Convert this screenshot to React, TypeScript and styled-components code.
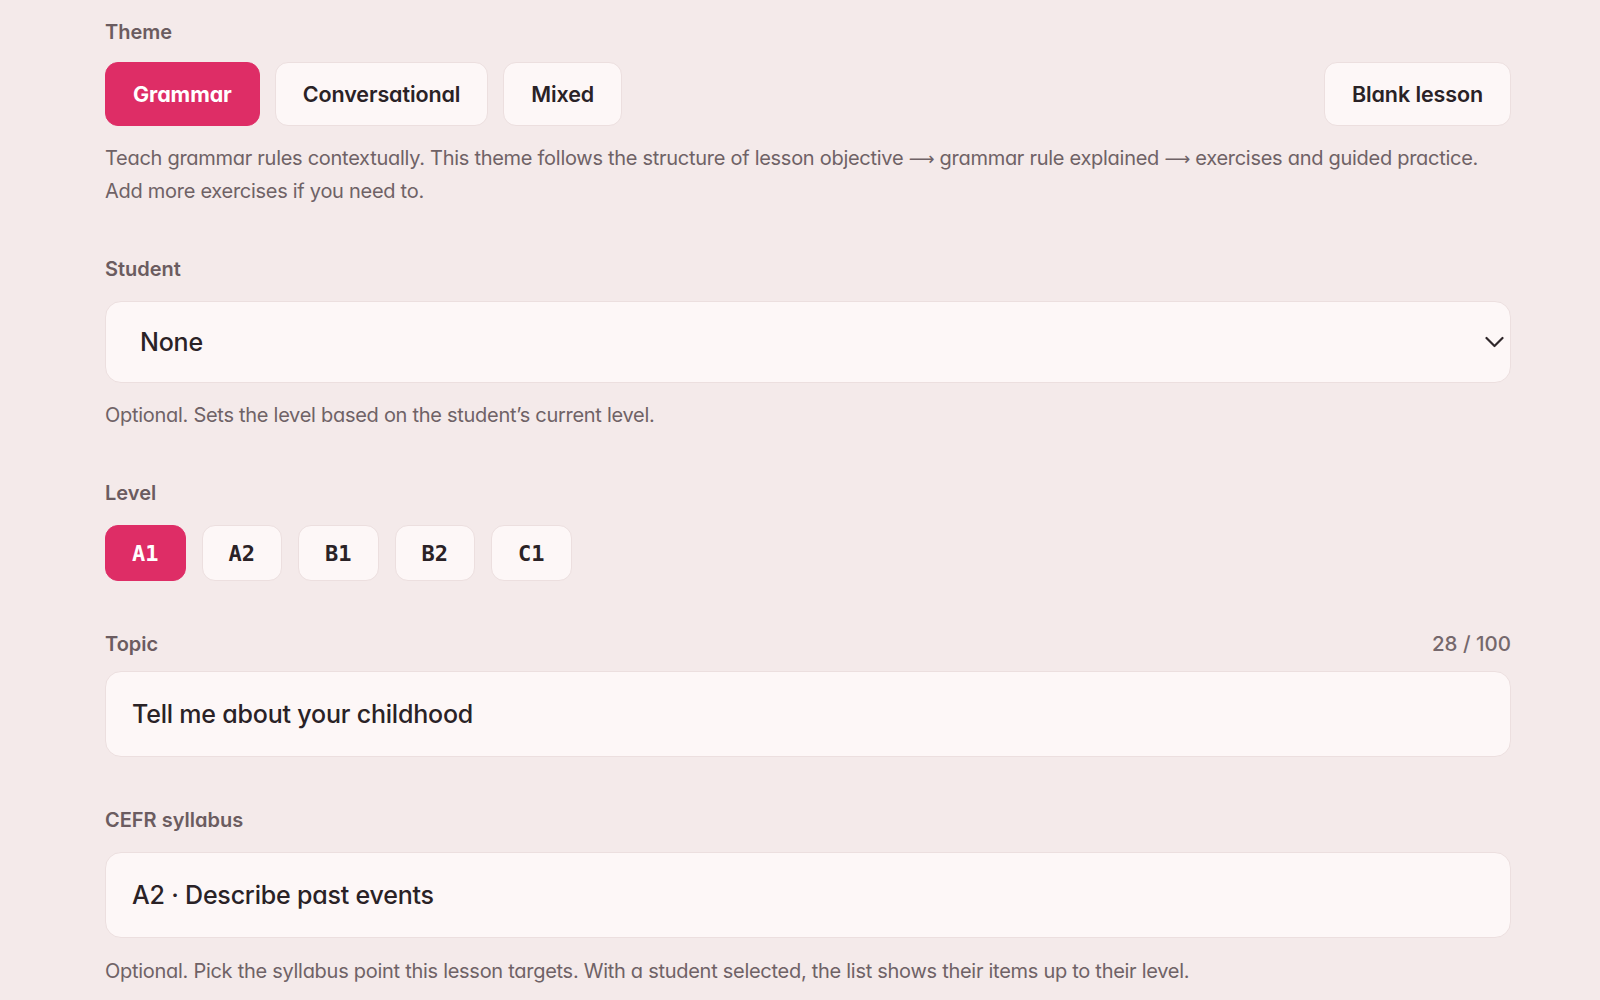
import React from "react";
import styled, { createGlobalStyle, css } from "styled-components";

const GlobalStyle = createGlobalStyle`
  html, body {
    margin: 0;
    padding: 0;
    background: #f4eaea;
  }
  body {
    font-family: Inter, "Noto Sans", "Liberation Sans", sans-serif;
    font-feature-settings: "cv11";
    color: #2a2226;
  }
  * { box-sizing: border-box; }
`;

const Page = styled.div`
  min-height: 1000px;
  background: #f4eaea;
  padding: 20px 89px 0 105px;
`;

const Form = styled.div`
  display: flex;
  flex-direction: column;
  gap: 49px;
`;

const Section = styled.section<{ $extraTop?: number }>`
  display: flex;
  flex-direction: column;
  margin-top: ${(p) => p.$extraTop ?? 0}px;
`;

const LabelRow = styled.div<{ $gap?: number }>`
  display: flex;
  justify-content: space-between;
  align-items: center;
  margin-bottom: ${(p) => p.$gap ?? 20}px;
`;

const Label = styled.span`
  font-size: 20px;
  line-height: 24px;
  font-weight: 600;
  color: #6b5c60;
`;

const Counter = styled.span`
  font-size: 20.5px;
  line-height: 24px;
  font-weight: 500;
  color: #75686c;
`;

const ButtonRow = styled.div<{ $gap: number }>`
  display: flex;
  gap: ${(p) => p.$gap}px;
  align-items: center;
`;

const Spacer = styled.div`
  flex: 1;
`;

const chipBase = css<{ $active?: boolean }>`
  border-radius: 13px;
  border: 1.5px solid ${(p) => (p.$active ? "#de2d66" : "#ecdfdf")};
  background: ${(p) => (p.$active ? "#de2d66" : "#fdf7f7")};
  color: ${(p) => (p.$active ? "#ffffff" : "#2a2226")};
  display: inline-flex;
  align-items: center;
  justify-content: center;
  cursor: pointer;
`;

const ThemeButton = styled.button<{ $active?: boolean }>`
  ${chipBase};
  height: 64px;
  padding: 0 27px;
  font-family: Inter, "Noto Sans", sans-serif;
  font-feature-settings: "cv11";
  font-size: 21.5px;
  font-weight: ${(p) => (p.$active ? 700 : 600)};
  letter-spacing: -0.1px;
`;

const LevelButton = styled.button<{ $active?: boolean }>`
  ${chipBase};
  width: 80.5px;
  height: 56px;
  font-family: "DejaVu Sans Mono", "Liberation Mono", monospace;
  font-size: 22px;
  font-weight: 700;
`;

const Description = styled.p`
  margin: 16px 0 0;
  font-size: 20px;
  line-height: 33px;
  color: #6f6266;
  letter-spacing: -0.28px;
`;

const Arrow = styled.span`
  font-family: "DejaVu Sans", sans-serif;
  font-size: 18px;
`;

const Hint = styled.p<{ $mt: number }>`
  margin: ${(p) => p.$mt}px 0 0;
  font-size: 20px;
  line-height: 33px;
  color: #6f6266;
  letter-spacing: -0.28px;
`;

const Field = styled.div<{ $height: number; $padLeft: number; $padRight: number }>`
  height: ${(p) => p.$height}px;
  border-radius: 16px;
  border: 1.5px solid #ecdfdf;
  background: #fdf7f7;
  display: flex;
  align-items: center;
  padding: 0 ${(p) => p.$padRight}px 0 ${(p) => p.$padLeft}px;
  font-size: 25px;
  font-weight: 500;
  color: #2a2226;
  letter-spacing: -0.2px;
`;

const FieldText = styled.span`
  flex: 1;
`;

const Chevron = () => (
  <svg width="19" height="12" viewBox="0 0 19 12" fill="none">
    <path d="M1.5 2l8 8 8-8" stroke="#2f272a" strokeWidth="2.2" strokeLinecap="round" strokeLinejoin="round" />
  </svg>
);

export default function App() {
  const themes = ["Grammar", "Conversational", "Mixed"];
  const levels = ["A1", "A2", "B1", "B2", "C1"];
  return (
    <>
      <GlobalStyle />
      <Page>
        <Form>
          <Section>
            <LabelRow $gap={18}>
              <Label>Theme</Label>
            </LabelRow>
            <ButtonRow $gap={15}>
              {themes.map((t, i) => (
                <ThemeButton key={t} $active={i === 0}>
                  {t}
                </ThemeButton>
              ))}
              <Spacer />
              <ThemeButton>Blank lesson</ThemeButton>
            </ButtonRow>
            <Description>
              Teach grammar rules contextually. This theme follows the structure of lesson objective <Arrow>⟶</Arrow>{" "}
              grammar rule explained <Arrow>⟶</Arrow> exercises and guided practice.
              <br />
              Add more exercises if you need to.
            </Description>
          </Section>

          <Section>
            <LabelRow>
              <Label>Student</Label>
            </LabelRow>
            <Field $height={82} $padLeft={34} $padRight={6}>
              <FieldText>None</FieldText>
              <Chevron />
            </Field>
            <Hint $mt={16}>Optional. Sets the level based on the student’s current level.</Hint>
          </Section>

          <Section>
            <LabelRow>
              <Label>Level</Label>
            </LabelRow>
            <ButtonRow $gap={16}>
              {levels.map((l, i) => (
                <LevelButton key={l} $active={i === 0}>
                  {l}
                </LevelButton>
              ))}
            </ButtonRow>
          </Section>

          <Section $extraTop={2}>
            <LabelRow $gap={15}>
              <Label>Topic</Label>
              <Counter>28 / 100</Counter>
            </LabelRow>
            <Field $height={86} $padLeft={26} $padRight={16}>
              <FieldText>Tell me about your childhood</FieldText>
            </Field>
          </Section>

          <Section $extraTop={2}>
            <LabelRow>
              <Label>CEFR syllabus</Label>
            </LabelRow>
            <Field $height={85.5} $padLeft={26} $padRight={16}>
              <FieldText>A2 · Describe past events</FieldText>
            </Field>
            <Hint $mt={17}>
              Optional. Pick the syllabus point this lesson targets. With a student selected, the list shows their
              items up to their level.
            </Hint>
          </Section>
        </Form>
      </Page>
    </>
  );
}
